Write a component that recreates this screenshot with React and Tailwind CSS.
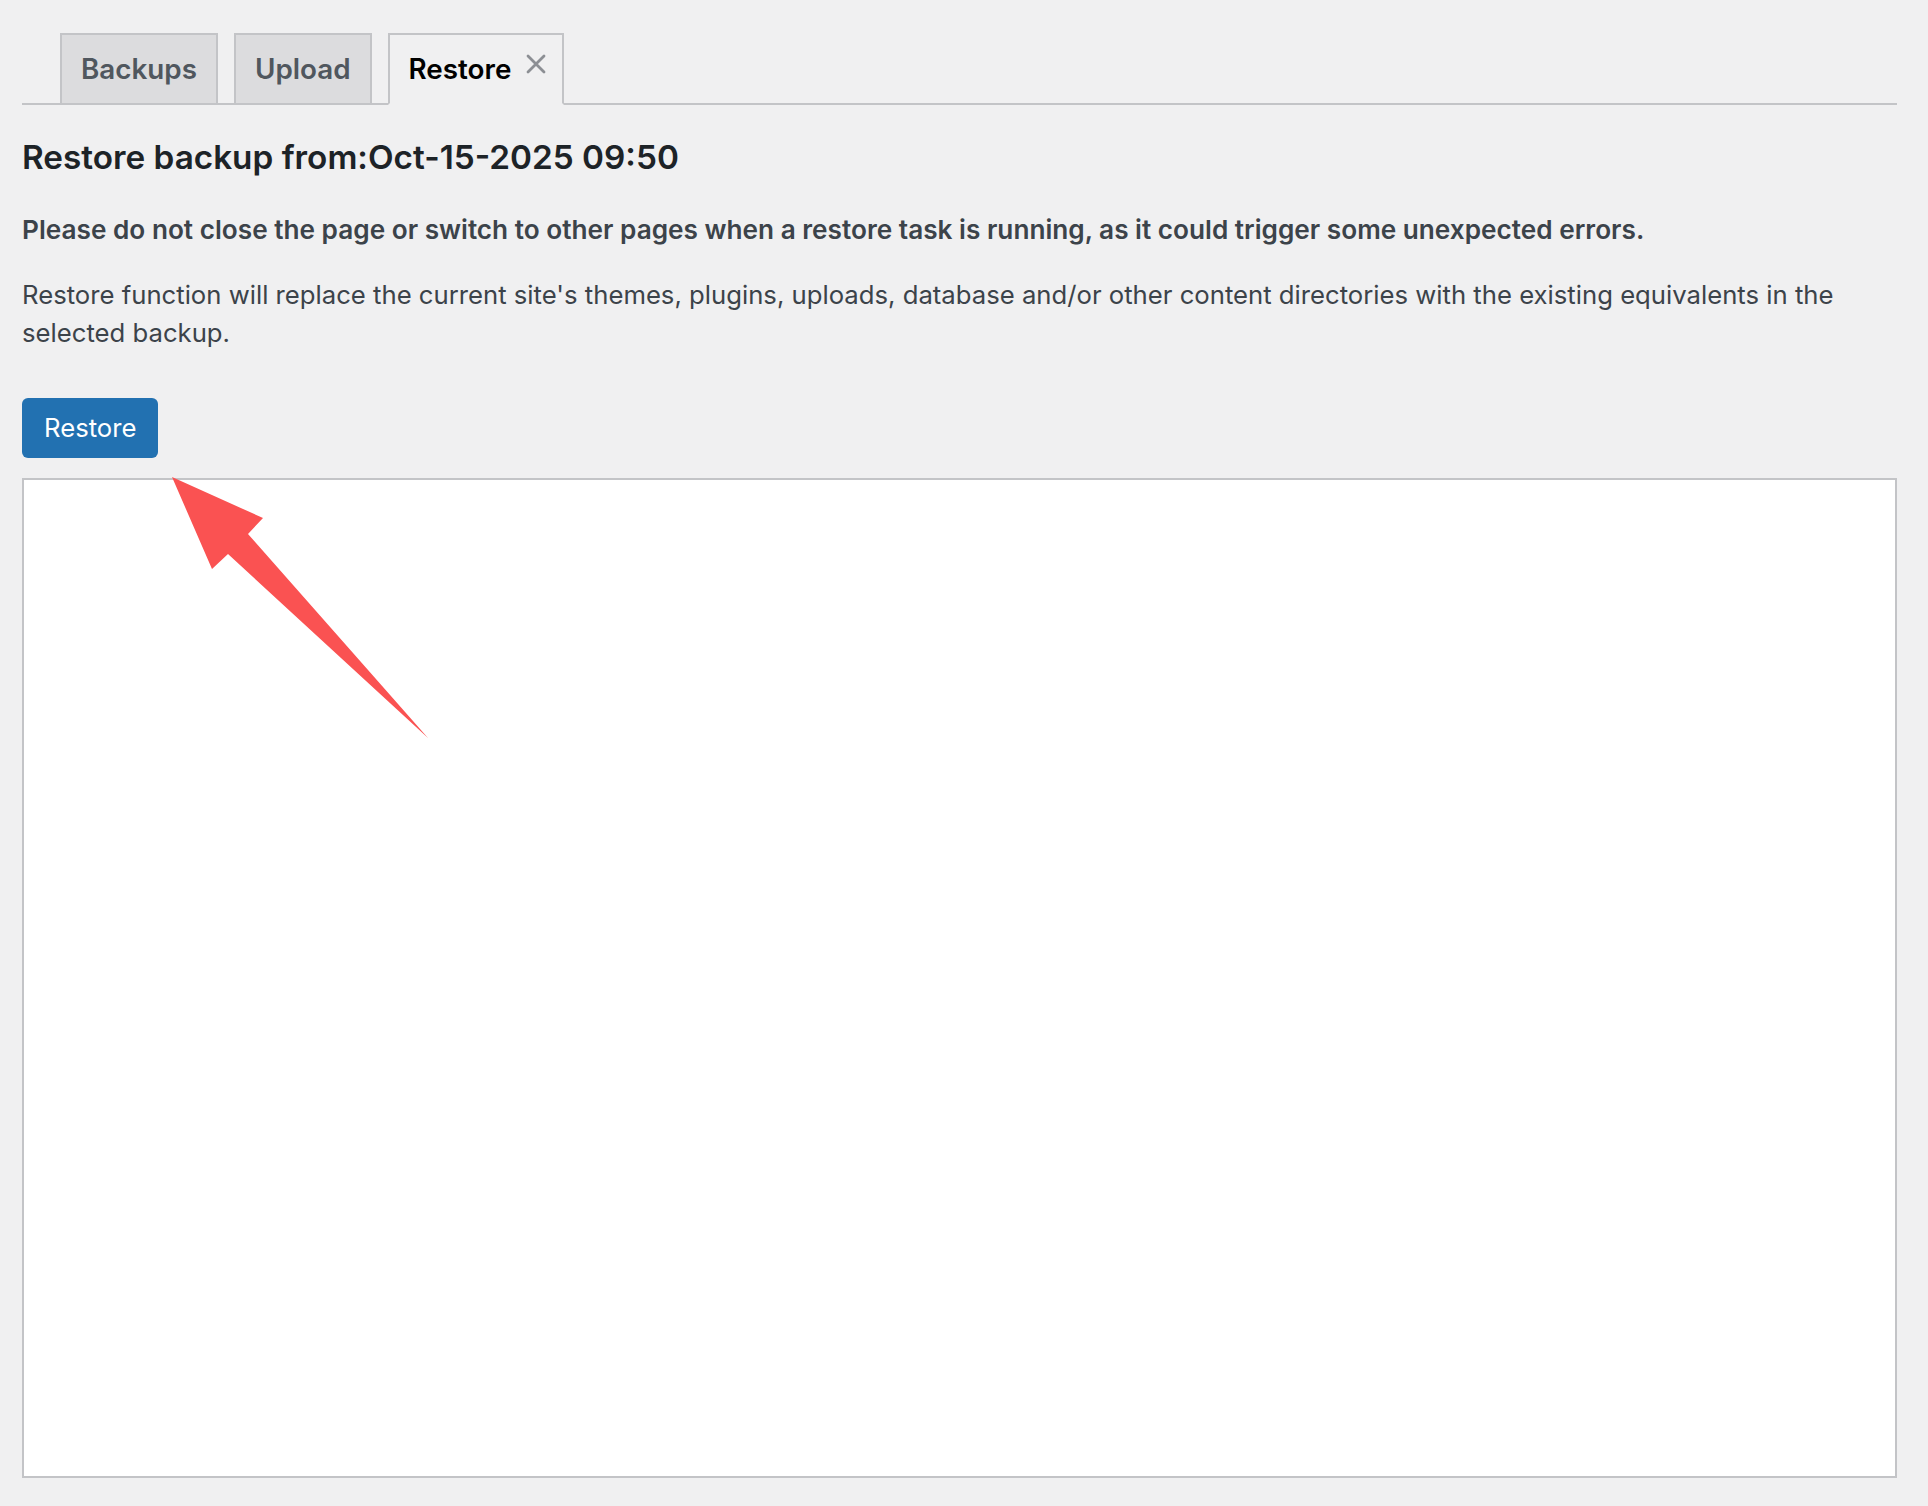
import React from 'react';

const tabBase = 'h-[72px] px-[19px] border-2 border-[#c3c4c7] text-[27.8px] font-semibold leading-[68px] -mb-[2px]';

const Tab = ({ label, active, closable }) => (
  <div
    className={
      active
        ? `${tabBase} pr-[16px] bg-[#f0f0f1] border-b-[#f0f0f1] text-black flex items-start`
        : `${tabBase} bg-[#dcdcde] text-[#50575e]`
    }
  >
    <span>{label}</span>
    {closable && (
      <span className="ml-[15px] mt-[19px] text-[#8c8f94]">
        <svg width="20" height="20" viewBox="0 0 20 20">
          <path d="M2 2 L18 18 M18 2 L2 18" stroke="currentColor" strokeWidth="2.8" strokeLinecap="round" />
        </svg>
      </span>
    )}
  </div>
);

export default function App() {
  return (
    <div
      className="relative min-h-[1506px] w-full bg-[#f0f0f1] pl-[22px] pr-[31px] pt-[33px] text-[#3c434a]"
      style={{ fontFamily: 'Inter, "Noto Sans", sans-serif' }}
    >
      {/* tabs */}
      <div className="flex gap-[16px] border-b-2 border-[#c3c4c7] pl-[38px]">
        <Tab label="Backups" />
        <Tab label="Upload" />
        <Tab label="Restore" active closable />
      </div>

      <h2 className="mt-[29px] text-[33.3px] leading-[46px] font-semibold text-[#1d2327]">
        Restore backup from:Oct-15-2025 09:50
      </h2>

      <p className="mt-[31px] text-[26.2px] leading-[38px] font-semibold">
        Please do not close the page or switch to other pages when a restore task is running, as it could trigger some unexpected errors.
      </p>

      <p className="mt-[27px] text-[25.7px] leading-[38px] pr-[40px]">
        Restore function will replace the current site's themes, plugins, uploads, database and/or other content directories with the existing equivalents in the selected backup.
      </p>

      <button className="mt-[46px] h-[60px] rounded-[6px] bg-[#2271b1] px-[22px] text-[25.7px] text-white">
        Restore
      </button>

      <div className="mt-[20px] h-[1000px] border-2 border-[#c3c4c7] bg-white"></div>

      {/* annotation arrow */}
      <svg
        className="absolute left-[160px] top-[470px] pointer-events-none"
        width="280"
        height="280"
        viewBox="0 0 280 280"
      >
        <polygon points="12,7 103,48 88,64 268,268 68,84 52,99" fill="#fa5252" />
      </svg>
    </div>
  );
}
